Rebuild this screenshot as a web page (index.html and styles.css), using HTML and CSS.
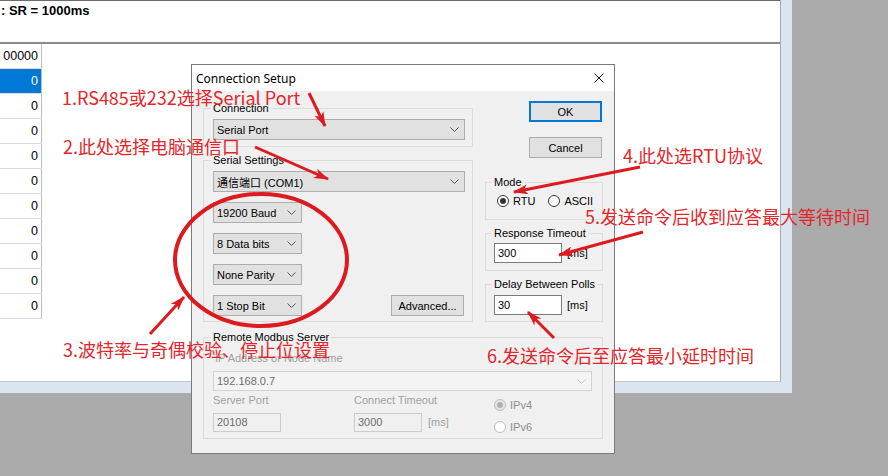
FILE: index.html
```html
<!DOCTYPE html>
<html lang="en">
<head>
  <meta charset="UTF-8" />
  <title>Connection Setup</title>
  <link rel="stylesheet" href="styles.css">
</head>
<body>

  <!-- main poll window behind the dialog -->
  <div class="window">
    <div class="client">
      <div class="status">: SR = 1000ms</div>
      <table class="regs">
        <thead><tr><th>00000</th></tr></thead>
        <tbody>
          <tr class="sel"><td>0</td></tr>
          <tr><td>0</td></tr>
          <tr><td>0</td></tr>
          <tr><td>0</td></tr>
          <tr><td>0</td></tr>
          <tr><td>0</td></tr>
          <tr><td>0</td></tr>
          <tr><td>0</td></tr>
          <tr><td>0</td></tr>
          <tr><td>0</td></tr>
        </tbody>
      </table>
    </div>
  </div>

  <!-- Connection Setup dialog -->
  <div class="dialog">
    <div class="titlebar">
      <span>Connection Setup</span>
      <svg class="close" width="10" height="10" viewBox="0 0 10 10"><path d="M0.5 0.5 L9.5 9.5 M9.5 0.5 L0.5 9.5" stroke="#111" stroke-width="1"/></svg>
    </div>

    <div class="dlg-body">
      <div class="top">
        <div class="col-left">
          <fieldset class="group g-conn">
            <legend>Connection</legend>
            <div class="combo wide">Serial Port<svg class="chev" width="9" height="5" viewBox="0 0 9 5"><polyline points="0.5,0.5 4.5,4.5 8.5,0.5" fill="none" stroke="#555"/></svg></div>
          </fieldset>

          <fieldset class="group g-serial">
            <legend>Serial Settings</legend>
            <div class="combo wide">通信端口 (COM1)<svg class="chev" width="9" height="5" viewBox="0 0 9 5"><polyline points="0.5,0.5 4.5,4.5 8.5,0.5" fill="none" stroke="#555"/></svg></div>
            <div class="serial-row">
              <div class="small-combos">
                <div class="combo small">19200 Baud<svg class="chev" width="9" height="5" viewBox="0 0 9 5"><polyline points="0.5,0.5 4.5,4.5 8.5,0.5" fill="none" stroke="#555"/></svg></div>
                <div class="combo small">8 Data bits<svg class="chev" width="9" height="5" viewBox="0 0 9 5"><polyline points="0.5,0.5 4.5,4.5 8.5,0.5" fill="none" stroke="#555"/></svg></div>
                <div class="combo small">None Parity<svg class="chev" width="9" height="5" viewBox="0 0 9 5"><polyline points="0.5,0.5 4.5,4.5 8.5,0.5" fill="none" stroke="#555"/></svg></div>
                <div class="combo small">1 Stop Bit<svg class="chev" width="9" height="5" viewBox="0 0 9 5"><polyline points="0.5,0.5 4.5,4.5 8.5,0.5" fill="none" stroke="#555"/></svg></div>
              </div>
              <button class="btn adv">Advanced...</button>
            </div>
          </fieldset>
        </div>

        <div class="col-right">
          <div class="buttons">
            <button class="btn ok">OK</button>
            <button class="btn">Cancel</button>
          </div>

          <fieldset class="group g-mode">
            <legend>Mode</legend>
            <div class="radios">
              <span class="radio"><i class="dot checked"></i>RTU</span>
              <span class="radio"><i class="dot"></i>ASCII</span>
            </div>
          </fieldset>

          <fieldset class="group g-resp">
            <legend>Response Timeout</legend>
            <div class="field"><span class="textbox">300</span><span>[ms]</span></div>
          </fieldset>

          <fieldset class="group g-delay">
            <legend>Delay Between Polls</legend>
            <div class="field"><span class="textbox">30</span><span>[ms]</span></div>
          </fieldset>
        </div>
      </div>

      <fieldset class="group g-remote">
        <legend>Remote Modbus Server</legend>
        <div class="muted">IP Address or Node Name</div>
        <div class="combo ip disabled">192.168.0.7<svg class="chev" width="9" height="5" viewBox="0 0 9 5"><polyline points="0.5,0.5 4.5,4.5 8.5,0.5" fill="none" stroke="#c4c4c4"/></svg></div>
        <div class="remote-grid">
          <div class="muted">Server Port</div>
          <div class="muted">Connect Timeout</div>
          <div class="ip-radios">
            <span class="radio off"><i class="dot checked"></i>IPv4</span>
            <span class="radio off"><i class="dot"></i>IPv6</span>
          </div>
          <div class="field"><span class="textbox disabled">20108</span></div>
          <div class="field"><span class="textbox disabled">3000</span><span class="muted">[ms]</span></div>
        </div>
      </fieldset>
    </div>
  </div>

  <!-- red annotations drawn over the screenshot -->
  <div class="note n1">1.RS485或232选择Serial Port</div>
  <div class="note n2">2.此处选择电脑通信口</div>
  <div class="note n3">3.波特率与奇偶校验、停止位设置</div>
  <div class="note n4">4.此处选RTU协议</div>
  <div class="note n5">5.发送命令后收到应答最大等待时间</div>
  <div class="note n6">6.发送命令后至应答最小延时时间</div>

  <svg class="marks" width="888" height="476" viewBox="0 0 888 476">
    <defs>
      <marker id="ah" markerWidth="15" markerHeight="10" refX="14" refY="5" orient="auto" markerUnits="userSpaceOnUse">
        <path d="M0,0 L15,5 L0,10 L4,5 z" fill="#dc1b20"/>
      </marker>
    </defs>
    <ellipse cx="261" cy="260" rx="86" ry="66" fill="none" stroke="#dc1b20" stroke-width="4"/>
    <g stroke="#dc1b20" stroke-width="3" marker-end="url(#ah)">
      <line x1="309" y1="93" x2="325" y2="126"/>
      <line x1="255" y1="147" x2="328" y2="179"/>
      <line x1="150" y1="334" x2="184" y2="297"/>
      <line x1="640" y1="167" x2="514" y2="192"/>
      <line x1="643" y1="232" x2="559" y2="255"/>
      <line x1="554" y1="338" x2="528" y2="312"/>
    </g>
  </svg>

</body>
</html>
```

FILE: styles.css
```css
body {
  margin: 0;
  width: 888px;
  height: 476px;
  position: relative;
  overflow: hidden;
  background: #ababab;
  font-family: "Liberation Sans", Arial, sans-serif;
}

/* ---- main window ---- */
.window {
  width: 781px;
  height: 382px;
  padding: 0 11px 11px 0;
  background: #dbe5f0;
}

.client {
  height: 381px;
  background: #fff;
  border-right: 1px solid #a9a9a9;
  border-bottom: 1px solid #c8c8c8;
}

.status {
  height: 39px;
  padding: 2px 0 0 1px;
  border-top: 1px solid #6b6b6b;
  border-bottom: 2px solid #8a8a8a;
  font-size: 13px;
  font-weight: bold;
  line-height: 16px;
}

.regs {
  border-collapse: collapse;
  width: 42px;
  font-size: 12.5px;
}

.regs th,
.regs td {
  height: 24px;
  padding: 0 3px 0 0;
  text-align: right;
  font-weight: normal;
  border-right: 1px solid #bdbdbd;
  border-bottom: 1px solid #dcdcdc;
}

.regs tr.sel td {
  background: #0078d7;
  color: #fff;
}

/* ---- dialog ---- */
.dialog {
  position: absolute;
  left: 191px;
  top: 64px;
  width: 422px;
  height: 388px;
  border: 1px solid #7a7a7a;
  background: #f0f0f0;
  font-size: 11px;
}

.titlebar {
  height: 26px;
  display: flex;
  align-items: center;
  justify-content: space-between;
  padding: 0 10px 0 4px;
  background: #fff;
  font-family: "Noto Sans", sans-serif;
  font-size: 12px;
}

.dlg-body {
  padding: 10px 11px 0 11px;
}

.top {
  display: flex;
  gap: 12px;
  align-items: flex-start;
}

.col-left {
  width: 270px;
  display: flex;
  flex-direction: column;
}

.col-right {
  width: 118px;
  display: flex;
  flex-direction: column;
}

.group {
  margin: 0;
  min-width: 0;
  border: 1px solid #dcdcdc;
  padding: 4px 7px 6px 9px;
}

.group legend {
  padding: 0 2px;
  margin-left: -2px;
  line-height: 13px;
  white-space: nowrap;
}

.g-conn { margin-top: 1px; }
.g-serial { margin-top: 7px; padding-bottom: 5px; }

.combo {
  box-sizing: border-box;
  height: 21px;
  display: flex;
  align-items: center;
  justify-content: space-between;
  padding: 0 5px 0 3px;
  border: 1px solid #adadad;
  background: #e1e1e1;
  font-family: "Liberation Sans", "Noto Sans CJK SC", sans-serif;
}

.combo.wide { width: 252px; }
.combo.small { width: 89px; }

.combo.disabled {
  background: #f4f4f4;
  border-color: #d2d2d2;
  color: #6d6d6d;
}

.serial-row {
  display: flex;
  justify-content: space-between;
  align-items: flex-end;
  margin-top: 10px;
}

.small-combos {
  display: flex;
  flex-direction: column;
  gap: 10px;
}

.btn {
  box-sizing: border-box;
  width: 73px;
  height: 21px;
  padding: 0;
  border: 1px solid #adadad;
  background: #e1e1e1;
  font-family: "Liberation Sans", Arial, sans-serif;
  font-size: 11px;
  color: #000;
}

.btn.adv { margin-right: 1px; }

.btn.ok {
  border-color: #0078d7;
  box-shadow: inset 0 0 0 1px #0078d7;
}

.buttons {
  display: flex;
  flex-direction: column;
  align-items: flex-end;
  gap: 15px;
  padding-right: 1px;
}

.g-mode { margin-top: 18px; padding: 5px 8px 12px 8px; }
.g-resp { margin-top: 7px; padding: 3px 8px 7px 8px; }
.g-delay { margin-top: 7px; padding: 4px 8px 6px 8px; }

.radios {
  display: flex;
  gap: 13px;
  padding-left: 3px;
}

.radio {
  display: flex;
  align-items: center;
  gap: 4px;
  height: 13px;
}

.dot {
  box-sizing: border-box;
  width: 12px;
  height: 12px;
  border: 1px solid #333;
  border-radius: 50%;
  background: #fff;
  position: relative;
}

.dot.checked::after {
  content: "";
  position: absolute;
  left: 2px;
  top: 2px;
  width: 6px;
  height: 6px;
  border-radius: 50%;
  background: #333;
}

.radio.off { color: #8d8d8d; }
.radio.off .dot { border-color: #bcbcbc; }
.radio.off .dot.checked { background: #e6e6e6; }
.radio.off .dot.checked::after { background: #b0b0b0; }

.field {
  display: flex;
  align-items: center;
  gap: 5px;
}

.textbox {
  box-sizing: border-box;
  width: 68px;
  height: 20px;
  padding: 0 3px;
  line-height: 18px;
  border: 1px solid #7a7a7a;
  background: #fff;
}

.textbox.disabled {
  height: 19px;
  line-height: 17px;
  border-color: #cccccc;
  background: #f0f0f0;
  color: #6d6d6d;
}

/* remote server block, all disabled */
.g-remote {
  margin-top: 9px;
  padding: 8px 10px 6px 9px;
}

.muted {
  color: #a0a0a0;
  line-height: 13px;
}

.g-remote > .muted { margin-left: 2px; }

.combo.ip {
  width: 379px;
  height: 20px;
  margin-top: 6px;
}

.remote-grid {
  display: grid;
  grid-template-columns: 141px 140px 1fr;
  grid-template-rows: 13px 19px;
  row-gap: 6px;
  margin-top: 3px;
}

.remote-grid .field { gap: 6px; }

.ip-radios {
  grid-column: 3;
  grid-row: 1 / 3;
  display: flex;
  flex-direction: column;
  gap: 10px;
  padding-top: 5px;
}

/* ---- annotations ---- */
.note {
  position: absolute;
  color: #e3262b;
  font-family: "Noto Sans CJK SC", sans-serif;
  font-size: 18px;
  line-height: 1;
  white-space: nowrap;
}

.n1 { left: 62px; top: 88px; }
.n2 { left: 63px; top: 137px; }
.n3 { left: 63px; top: 340px; }
.n4 { left: 623px; top: 146px; }
.n5 { left: 585px; top: 207px; }
.n6 { left: 487px; top: 346px; }

.marks {
  position: absolute;
  left: 0;
  top: 0;
  pointer-events: none;
}
```
